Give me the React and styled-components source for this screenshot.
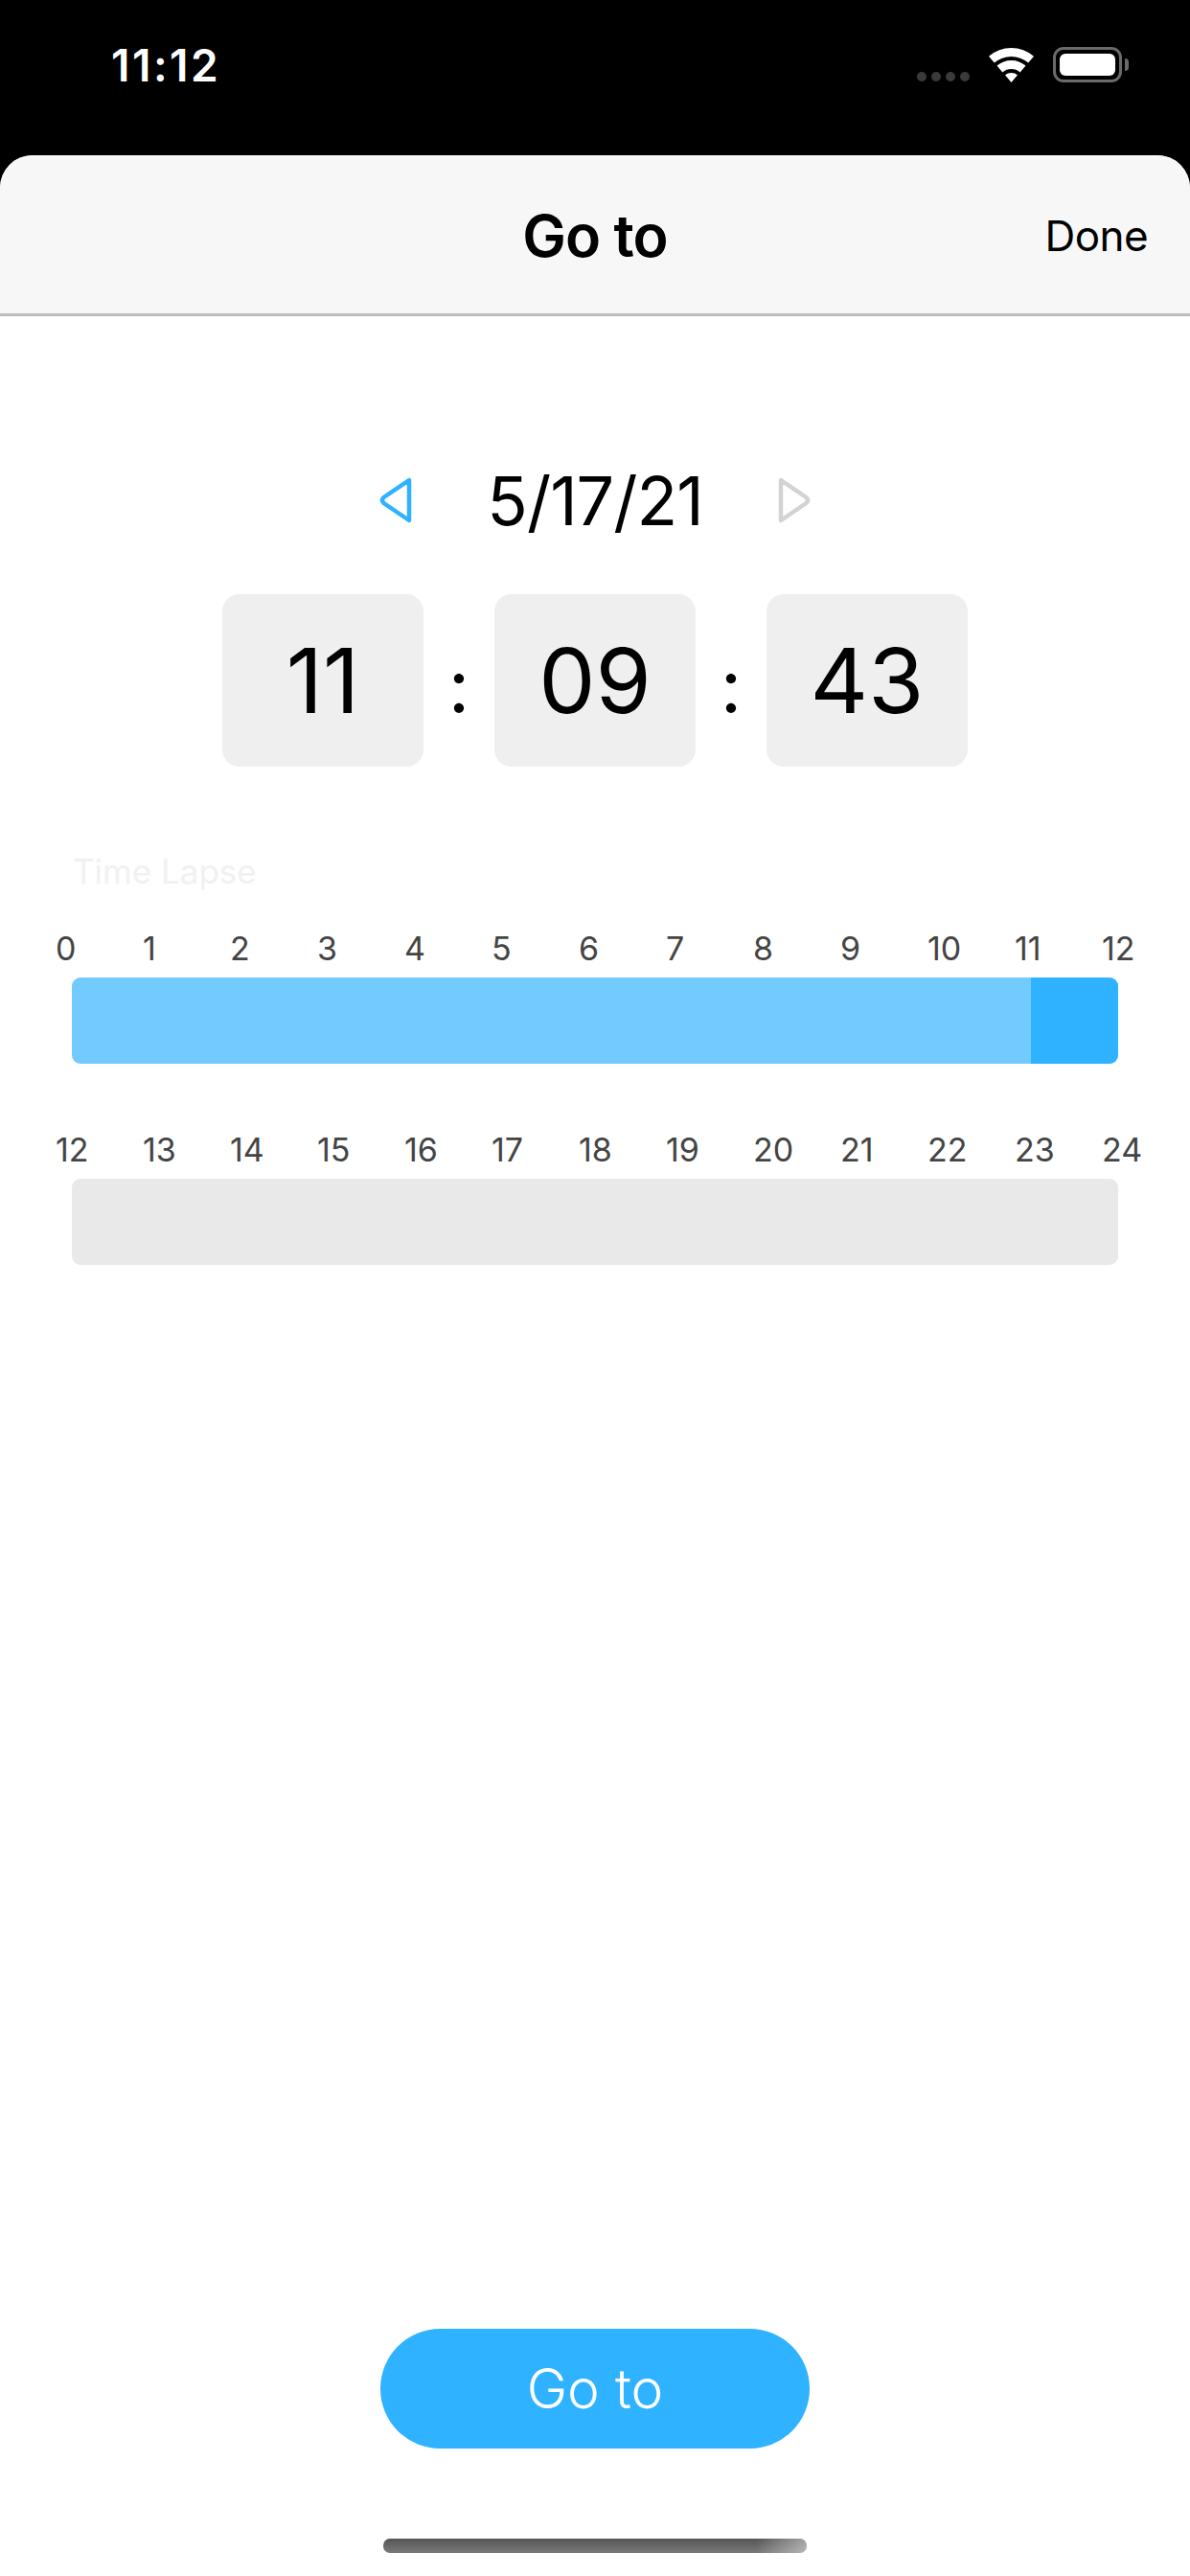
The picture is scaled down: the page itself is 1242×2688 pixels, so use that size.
import React from "react";
import styled, { createGlobalStyle } from "styled-components";

const GlobalStyle = createGlobalStyle`
  html, body {
    margin: 0;
    padding: 0;
    background: #000;
  }
  * {
    box-sizing: border-box;
  }
`;

const Screen = styled.div`
  display: flex;
  flex-direction: column;
  width: 1242px;
  height: 2688px;
  overflow: hidden;
  background: #000;
  font-family: "Inter", "Liberation Sans", sans-serif;
`;

const StatusBar = styled.div`
  display: flex;
  align-items: flex-start;
  justify-content: space-between;
  height: 162px;
  padding: 44px 71px 0 116px;
`;

const Clock = styled.div`
  font-size: 46px;
  font-weight: 600;
  line-height: 48px;
  letter-spacing: 2.5px;
  color: #fff;
`;

const StatusIcons = styled.div`
  display: flex;
  align-items: flex-end;
  margin-top: 5px;
`;

const SignalDots = styled.div`
  display: flex;
  gap: 5px;
  margin-right: 20px;
  margin-bottom: 1px;
`;

const SignalDot = styled.span`
  width: 10px;
  height: 10px;
  border-radius: 50%;
  background: #3a3a3a;
`;

const Battery = styled.div`
  position: relative;
  width: 72px;
  height: 37px;
  margin-left: 20px;
  padding: 4px;
  border: 3px solid #6a6a6a;
  border-radius: 11px;
`;

const BatteryFill = styled.div`
  width: 100%;
  height: 100%;
  border-radius: 6px;
  background: #fff;
`;

const BatteryNub = styled.span`
  position: absolute;
  top: 9px;
  right: -10px;
  width: 4px;
  height: 13px;
  border-radius: 0 4px 4px 0;
  background: #6a6a6a;
`;

const Sheet = styled.div`
  display: flex;
  flex: 1;
  flex-direction: column;
  overflow: hidden;
  border-radius: 34px 34px 0 0;
  background: #fff;
`;

const NavBar = styled.div`
  display: grid;
  grid-template-columns: 1fr auto 1fr;
  align-items: center;
  height: 168px;
  padding-top: 3px;
  border-bottom: 3px solid #bdbdbd;
  background: #f7f7f7;
`;

const NavTitle = styled.div`
  grid-column: 2;
  font-size: 61px;
  font-weight: 600;
  letter-spacing: -1px;
  color: #000;
`;

const DoneButton = styled.div`
  justify-self: end;
  margin-right: 44px;
  font-size: 44px;
  letter-spacing: -0.6px;
  color: #000;
`;

const Body = styled.div`
  display: flex;
  flex: 1;
  flex-direction: column;
`;

const DateRow = styled.div`
  display: flex;
  align-items: center;
  justify-content: center;
  height: 80px;
  margin-top: 152px;
`;

const DateLabel = styled.div`
  width: 382px;
  font-size: 70px;
  letter-spacing: -1px;
  text-align: center;
  color: #000;
`;

const TimeRow = styled.div`
  display: flex;
  justify-content: center;
  margin-top: 58px;
`;

const TimeBox = styled.div`
  display: flex;
  align-items: center;
  justify-content: center;
  width: 210px;
  height: 180px;
  border-radius: 18px;
  font-size: 94px;
  color: #000;
  background: #efefef;
`;

const TimeColon = styled.div`
  display: flex;
  align-items: center;
  justify-content: center;
  width: 74px;
  padding-top: 10px;
  font-size: 78px;
  color: #000;
`;

const SectionTitle = styled.div`
  margin: 89px 0 0 76px;
  font-size: 35px;
  line-height: 40px;
  color: #f1f1f1;
`;

const HourLabels = styled.div`
  display: grid;
  grid-template-columns: repeat(13, 91px);
  margin: ${(p) => p.$top}px 0 0 58px;
  font-size: 34px;
  line-height: 40px;
  color: #444;
`;

const Track = styled.div`
  display: flex;
  justify-content: flex-end;
  width: 1092px;
  height: 90px;
  margin: 10px 0 0 75px;
  overflow: hidden;
  border-radius: 9px;
  background: ${(p) => (p.$recorded ? "#72caff" : "#e9e9e9")};
`;

const CurrentHour = styled.div`
  width: 91px;
  background: #2fb2ff;
`;

const Footer = styled.div`
  display: flex;
  flex-direction: column;
  align-items: center;
  gap: 94px;
  margin-top: auto;
  padding-bottom: 24px;
`;

const GoButton = styled.div`
  display: flex;
  align-items: center;
  justify-content: center;
  width: 448px;
  height: 125px;
  border-radius: 63px;
  font-size: 57px;
  font-weight: 300;
  color: #fff;
  background: #2fb2ff;
`;

const HomeIndicator = styled.div`
  width: 442px;
  height: 15px;
  border-radius: 7px;
  background: linear-gradient(90deg, rgba(255, 255, 255, 0) 88%, rgba(255, 255, 255, 0.45) 100%),
    linear-gradient(180deg, #555 0%, #7a7a7a 100%);
`;

const ArrowSvg = styled.svg`
  flex: none;
  width: 34px;
  height: 48px;
  fill: none;
  stroke: ${(p) => (p.$enabled ? "#2fb2ff" : "#d3d3d3")};
  stroke-width: 4.5;
  stroke-linejoin: round;
`;

const WifiIcon = () => (
  <svg width="47" height="36" viewBox="0 0 47 36" fill="#fff">
    <path d="M0 8.8 A36 36 0 0 1 47 8.8 L41.2 15.6 A27 27 0 0 0 5.8 15.6 Z" />
    <path d="M8.5 18.6 A23 23 0 0 1 38.5 18.6 L32.7 25.4 A14 14 0 0 0 14.3 25.4 Z" />
    <path d="M17 28.3 A10 10 0 0 1 30 28.3 L23.5 36 Z" />
  </svg>
);

const LeftArrow = () => (
  <ArrowSvg viewBox="0 0 34 48" $enabled>
    <path d="M31 3 V45 L4.5 27 Q1.5 24 4.5 21 Z" />
  </ArrowSvg>
);

const RightArrow = () => (
  <ArrowSvg viewBox="0 0 34 48">
    <path d="M3 3 V45 L29.5 27 Q32.5 24 29.5 21 Z" />
  </ArrowSvg>
);

const range = (from, to) => {
  const hours = [];
  for (let h = from; h <= to; h++) hours.push(h);
  return hours;
};

const HourTrack = ({ from, to, top, recorded }) => (
  <>
    <HourLabels $top={top}>
      {range(from, to).map((h) => (
        <span key={h}>{h}</span>
      ))}
    </HourLabels>
    <Track $recorded={recorded}>{recorded && <CurrentHour />}</Track>
  </>
);

const App = () => {
  return (
    <Screen>
      <GlobalStyle />
      <StatusBar>
        <Clock>11:12</Clock>
        <StatusIcons>
          <SignalDots>
            <SignalDot />
            <SignalDot />
            <SignalDot />
            <SignalDot />
          </SignalDots>
          <WifiIcon />
          <Battery>
            <BatteryFill />
            <BatteryNub />
          </Battery>
        </StatusIcons>
      </StatusBar>

      <Sheet>
        <NavBar>
          <NavTitle>Go to</NavTitle>
          <DoneButton>Done</DoneButton>
        </NavBar>

        <Body>
          <DateRow>
            <LeftArrow />
            <DateLabel>5/17/21</DateLabel>
            <RightArrow />
          </DateRow>

          <TimeRow>
            <TimeBox>11</TimeBox>
            <TimeColon>:</TimeColon>
            <TimeBox>09</TimeBox>
            <TimeColon>:</TimeColon>
            <TimeBox>43</TimeBox>
          </TimeRow>

          <SectionTitle>Time Lapse</SectionTitle>
          <HourTrack from={0} to={12} top={41} recorded />
          <HourTrack from={12} to={24} top={70} />

          <Footer>
            <GoButton>Go to</GoButton>
            <HomeIndicator />
          </Footer>
        </Body>
      </Sheet>
    </Screen>
  );
};

export default App;
